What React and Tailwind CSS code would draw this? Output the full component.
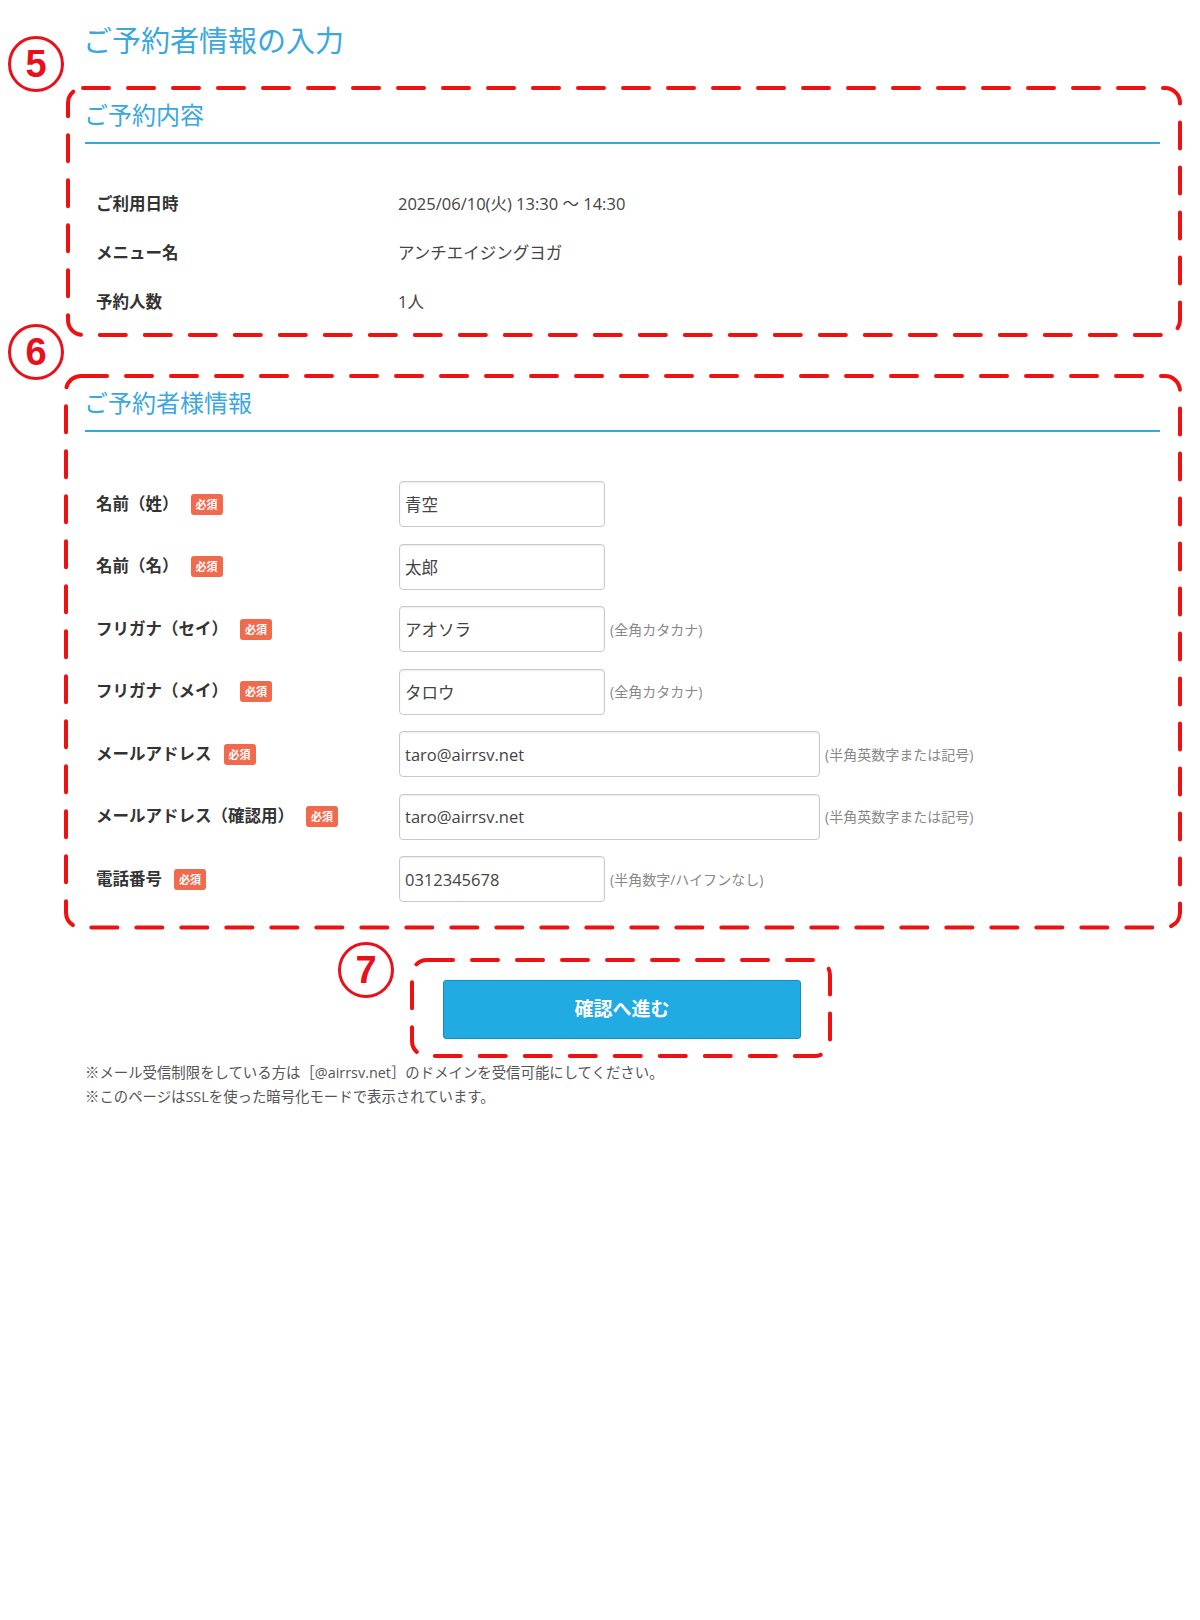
import React from 'react';

const FONT = 'font-["Open_Sans","Noto_Sans_CJK_JP",sans-serif]';

const summaryRows = [
  { label: 'ご利用日時', value: '2025/06/10(火) 13:30 ～ 14:30' },
  { label: 'メニュー名', value: 'アンチエイジングヨガ' },
  { label: '予約人数', value: '1人' },
];

const formRows = [
  { label: '名前（姓）', value: '青空', wide: false, note: '' },
  { label: '名前（名）', value: '太郎', wide: false, note: '' },
  { label: 'フリガナ（セイ）', value: 'アオソラ', wide: false, note: '(全角カタカナ)' },
  { label: 'フリガナ（メイ）', value: 'タロウ', wide: false, note: '(全角カタカナ)' },
  { label: 'メールアドレス', value: 'taro@airrsv.net', wide: true, note: '(半角英数字または記号)' },
  { label: 'メールアドレス（確認用）', value: 'taro@airrsv.net', wide: true, note: '(半角英数字または記号)' },
  { label: '電話番号', value: '0312345678', wide: false, note: '(半角数字/ハイフンなし)' },
];

// red dashed annotation frame drawn over a panel
function DashFrame() {
  return (
    <svg className="pointer-events-none absolute inset-0 h-full w-full overflow-visible">
      <rect
        x="0"
        y="0"
        width="100%"
        height="100%"
        rx="15"
        fill="none"
        stroke="#ee1111"
        strokeWidth="4"
        strokeDasharray="26 19"
        strokeLinecap="round"
      />
    </svg>
  );
}

function Marker({ n, className }) {
  return (
    <div
      className={`absolute flex h-[56px] w-[56px] items-center justify-center rounded-full border-[3px] border-[#e8101a] bg-white text-[38px] leading-none font-bold text-[#e8101a] font-["Liberation_Sans",sans-serif] ${className}`}
    >
      {n}
    </div>
  );
}

function SectionHeading({ children }) {
  return (
    <div className="border-b-2 border-[#35a9da] pt-[12px] pb-[12px]">
      <h2 className="-ml-px text-[24px] leading-[30px] font-normal text-[#3aa8de]">{children}</h2>
    </div>
  );
}

export default function App() {
  return (
    <div className={`min-h-[1620px] w-full bg-white text-[#333] ${FONT}`}>
      <div className="pt-[23px] pl-[66px]">
        <h1 className="pl-[17px] text-[29px] leading-[36px] font-normal text-[#3aa8de]">ご予約者情報の入力</h1>

        {/* 5: reservation summary */}
        <section className="relative mt-[29px] ml-[2px] h-[247px] w-[1112px] pr-[20px] pl-[17px]">
          <DashFrame />
          <Marker n="5" className="top-[-52px] left-[-60px]" />
          <SectionHeading>ご予約内容</SectionHeading>
          <div className="mt-[36px] pl-[11px]">
            {summaryRows.map((r) => (
              <div key={r.label} className="flex h-[49px] items-center text-[16.5px]">
                <div className="w-[302px] font-bold">{r.label}</div>
                <div className="text-[#444]">{r.value}</div>
              </div>
            ))}
          </div>
        </section>

        {/* 6: customer info */}
        <section className="relative mt-[41px] w-[1114px] pr-[20px] pb-[17px] pl-[19px]">
          <DashFrame />
          <Marker n="6" className="top-[-52px] left-[-58px]" />
          <SectionHeading>ご予約者様情報</SectionHeading>
          <div className="mt-[41px] pl-[11px]">
            {formRows.map((r) => (
              <div key={r.label} className="flex h-[62.5px] items-center">
                <div className="flex w-[303px] items-center">
                  <span className="text-[16.5px] font-bold">{r.label}</span>
                  <span className="ml-3 flex h-[21px] w-[32px] items-center justify-center rounded-[3px] bg-[#f06a4d] text-[11px] leading-none font-bold text-white">
                    必須
                  </span>
                </div>
                <input
                  readOnly
                  value={r.value}
                  className={`h-[46px] rounded-[4px] border border-[#c9c9c9] bg-white px-[5px] text-[16.5px] text-[#444] shadow-[inset_0_1px_2px_rgba(0,0,0,0.08)] outline-none ${
                    r.wide ? 'w-[421px]' : 'w-[206px]'
                  }`}
                />
                {r.note && <span className="ml-[5px] text-[14px] text-[#888]">{r.note}</span>}
              </div>
            ))}
          </div>
        </section>

        {/* 7: submit */}
        <div className="relative mt-[32px] ml-[346px] w-[418px] pt-[20px] pr-[29px] pb-[17px] pl-[31px]">
          <DashFrame />
          <Marker n="7" className="top-[-18px] left-[-74px]" />
          <button className="flex h-[59px] w-[358px] items-center justify-center rounded-[3px] border border-[#1a8cc0] bg-[#20abe2] text-[19px] font-bold text-white">
            確認へ進む
          </button>
        </div>

        <div className="mt-[5px] pl-[19px] text-[14.4px] leading-[24px] text-[#555]">
          <p>※メール受信制限をしている方は［@airrsv.net］のドメインを受信可能にしてください。</p>
          <p>※このページはSSLを使った暗号化モードで表示されています。</p>
        </div>
      </div>
    </div>
  );
}
